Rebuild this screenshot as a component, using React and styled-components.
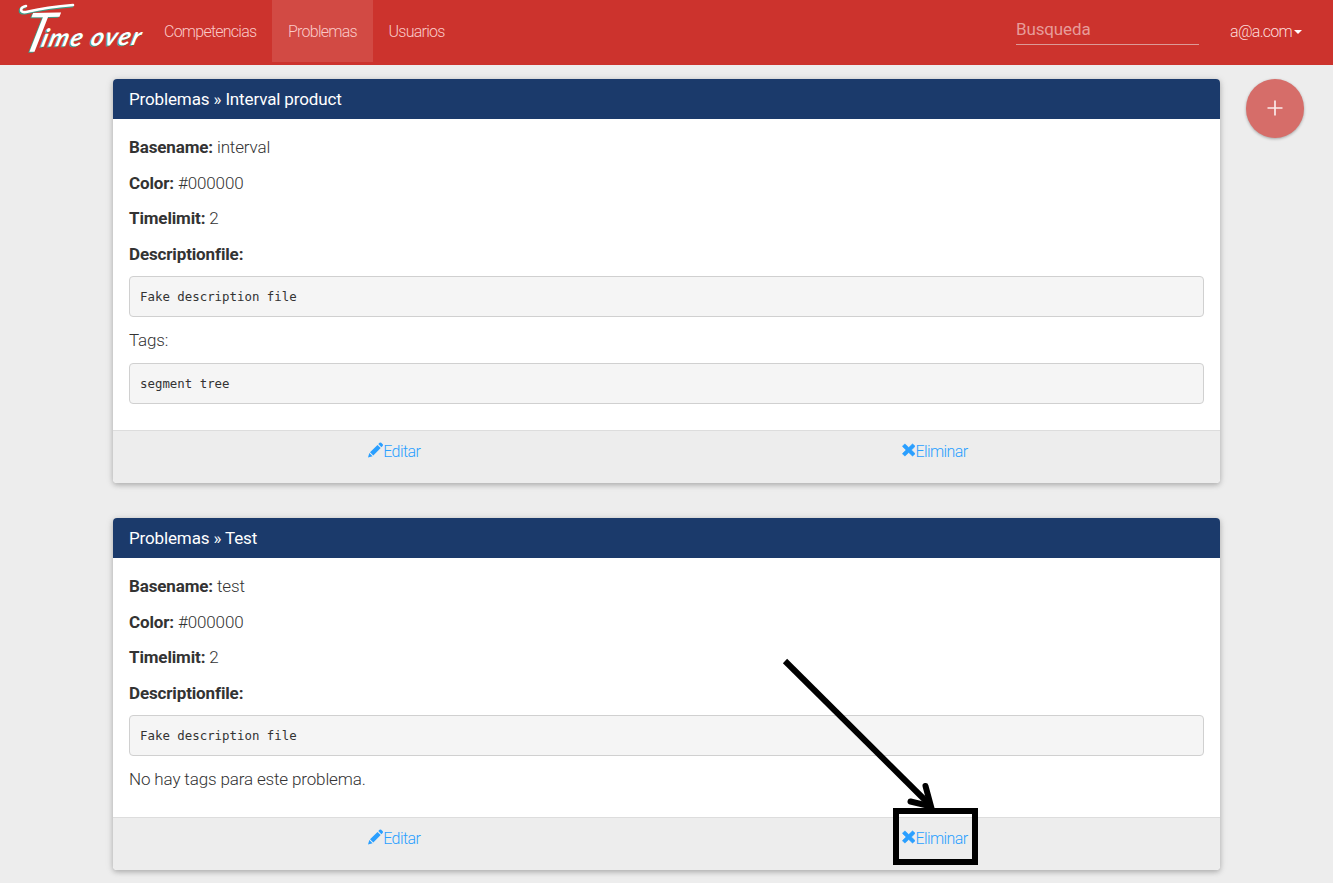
import React from 'react';
import styled, { createGlobalStyle } from 'styled-components';

const GlobalStyle = createGlobalStyle`
  * { box-sizing: border-box; }
  html, body { margin: 0; }
  body {
    background: #ededed;
    color: #333;
    font: 300 17px/25.5px Roboto, sans-serif;
    letter-spacing: -0.14px;
    height: 883px;
    overflow: hidden;
  }
`;

const Navbar = styled.header`
  display: flex;
  height: 65px;
  background: #cc332d;
`;

const Brand = styled.a`
  position: relative;
  width: 148px;
  height: 65px;
  flex: none;
  padding-left: 20px;
  color: #fff;
  font: italic 700 25px/65px Lato, sans-serif;
  letter-spacing: 1.4px;
  text-shadow: -1px 1px 0 #3f9d88;
  white-space: nowrap;
`;

const BrandText = styled.span`
  display: block;
  height: 65px;
  transform: translateY(-1px) rotate(-1deg) skewX(-16deg);
  transform-origin: 0 50px;
`;

const BrandInitial = styled.span`
  font-size: 54px;
  font-weight: 400;
  letter-spacing: -10px;
  vertical-align: -5px;
`;

const Flourish = styled.svg`
  position: absolute;
  left: 0;
  top: 0;
`;

const Nav = styled.nav`
  display: flex;
  height: 62px;
`;

const NavItem = styled.a`
  padding: 0 15.7px 0 16px;
  font-size: 16px;
  line-height: 63px;
  height: 62px;
  letter-spacing: -0.76px;
  color: #fac9c7;
  background: ${(p) => (p.$active ? '#d24a44' : 'transparent')};
`;

const Search = styled.div`
  width: 183px;
  height: 45px;
  margin-left: auto;
  padding: 17px 0 0;
  border-bottom: 1px solid #dc9a97;
  color: #e79c99;
  font-size: 17px;
  font-weight: 400;
`;

const Account = styled.a`
  display: flex;
  align-items: center;
  height: 63px;
  width: 72px;
  margin: 0 31px;
  font-size: 16px;
  letter-spacing: -0.7px;
  color: #fcdbd9;
  white-space: nowrap;
`;

const Caret = styled.i`
  margin-left: 2px;
  border: 4px solid transparent;
  border-top-color: #fff;
  border-bottom: 0;
`;

const Main = styled.main`
  display: flex;
  padding: 14px 29px 0 113px;
`;

const Cards = styled.div`
  display: flex;
  flex-direction: column;
  gap: 35px;
  width: 1107px;
`;

const Card = styled.section`
  border-radius: 4px;
  background: #fff;
  box-shadow: 0 2px 5px rgba(0, 0, 0, 0.2), 0 1px 8px rgba(0, 0, 0, 0.12);
`;

const CardHeader = styled.h3`
  margin: 0;
  height: 40px;
  padding: 0 16px;
  border-radius: 4px 4px 0 0;
  background: #1b3a6b;
  color: #fff;
  font-size: 17px;
  font-weight: 400;
  line-height: 40px;
`;

const CardBody = styled.div`
  height: ${(p) => p.$height}px;
  padding: 16px;
`;

const Field = styled.p`
  margin: 0 0 10px;
`;

const Label = styled.b`
  font-weight: 700;
`;

const Pre = styled.pre`
  height: 41px;
  margin: -0.6px 0 10.6px;
  padding: 1px 10px 0;
  border: 1px solid #d0d0d0;
  border-radius: 4px;
  background: #f5f5f5;
  font: 400 12.4px/38px 'DejaVu Sans Mono', monospace;
  letter-spacing: 0;
`;

const CardFooter = styled.footer`
  display: grid;
  grid-template-columns: 1fr 1fr;
  height: 53px;
  padding: 8px 15px 0 11px;
  border-top: 1px solid #ddd;
  border-radius: 0 0 4px 4px;
  background: #ededed;
`;

const Action = styled.a`
  display: flex;
  justify-content: center;
  height: 25px;
  color: #2a9fff;
  font-size: 16px;
  letter-spacing: -0.6px;
`;

const ActionIcon = styled.svg`
  width: 15px;
  height: 16px;
  flex: none;
  margin-top: 3px;
  fill: #2a9fff;
`;

const CrossIcon = styled(ActionIcon)`
  width: 13.5px;
  stroke: #2a9fff;
  stroke-width: 0.7px;
`;

const AddButton = styled.button`
  display: flex;
  align-items: center;
  justify-content: center;
  width: 58.5px;
  height: 58.5px;
  margin-left: 25.5px;
  padding: 0;
  border: 0;
  border-radius: 50%;
  background: #d66d69;
  box-shadow: 0 1px 3px rgba(0, 0, 0, 0.3);
`;

const Annotation = styled.svg`
  position: absolute;
  left: 0;
  top: 0;
  pointer-events: none;
`;

const problems = [
  { name: 'Interval product', basename: 'interval', tags: 'segment tree', height: 311 },
  { name: 'Test', basename: 'test', tags: null, height: 259 },
];

function Problem({ problem }) {
  return (
    <Card>
      <CardHeader>Problemas » {problem.name}</CardHeader>
      <CardBody $height={problem.height}>
        <Field><Label>Basename:</Label> {problem.basename}</Field>
        <Field><Label>Color:</Label> #000000</Field>
        <Field><Label>Timelimit:</Label> 2</Field>
        <Field><Label>Descriptionfile:</Label></Field>
        <Pre>Fake description file</Pre>
        {problem.tags ? (
          <>
            <Field>Tags:</Field>
            <Pre>{problem.tags}</Pre>
          </>
        ) : (
          <Field>No hay tags para este problema.</Field>
        )}
      </CardBody>
      <CardFooter>
        <Action>
          <ActionIcon viewBox="0 0 15 16">
            <path d="M0 15.5 1.3 11 4.6 14.3ZM2 10.3 9.5 2.9 12.7 6.1 5.3 13.5ZM10.3 2.1 11.6.8Q12.4 0 13.2.8L14.7 2.3Q15.4 3.1 14.6 4L13.4 5.3Z" />
          </ActionIcon>
          Editar
        </Action>
        <Action>
          <CrossIcon viewBox="0 0 14 16">
            <path d="M3.4 2 7 5.5 10.6 2Q11 1.6 11.4 2L13.2 3.8Q13.6 4.2 13.2 4.6L9.7 8 13.2 11.4Q13.6 11.8 13.2 12.2L11.4 14Q11 14.4 10.6 14L7 10.5 3.4 14Q3 14.4 2.6 14L.8 12.2Q.4 11.8.8 11.4L4.3 8 .8 4.6Q.4 4.2.8 3.8L2.6 2Q3 1.6 3.4 2Z" />
          </CrossIcon>
          Eliminar
        </Action>
      </CardFooter>
    </Card>
  );
}

export default function App() {
  return (
    <>
      <GlobalStyle />
      <Navbar>
        <Brand>
          <Flourish width="148" height="65" fill="none" strokeLinecap="round" strokeLinejoin="round">
            <path d="M25 7C19 8 18 14 25 13Q46 8 72 6" stroke="#3f9d88" strokeWidth="3" />
            <path d="M26 6C20 7 19 13 26 12Q47 7 73 5" stroke="#fff" strokeWidth="2.6" />
          </Flourish>
          <BrandText><BrandInitial>T</BrandInitial>ime over</BrandText>
        </Brand>
        <Nav>
          <NavItem>Competencias</NavItem>
          <NavItem $active>Problemas</NavItem>
          <NavItem>Usuarios</NavItem>
        </Nav>
        <Search>Busqueda</Search>
        <Account>a@a.com<Caret /></Account>
      </Navbar>
      <Main>
        <Cards>
          {problems.map((p) => <Problem key={p.name} problem={p} />)}
        </Cards>
        <AddButton aria-label="Agregar">
          <svg width="16" height="16" viewBox="0 0 16 16">
            <path d="M8 .5v15M.5 8h15" stroke="#fbeaea" strokeWidth="1.7" />
          </svg>
        </AddButton>
      </Main>
      <Annotation width="1333" height="883" fill="none" stroke="#000">
        <path d="M785 661 930 805" strokeWidth="6" />
        <path d="M910.500 801.500 931 806.500 925.500 786" strokeWidth="6" strokeLinecap="round" />
        <rect x="896" y="811" width="79" height="51" strokeWidth="6" />
      </Annotation>
    </>
  );
}
